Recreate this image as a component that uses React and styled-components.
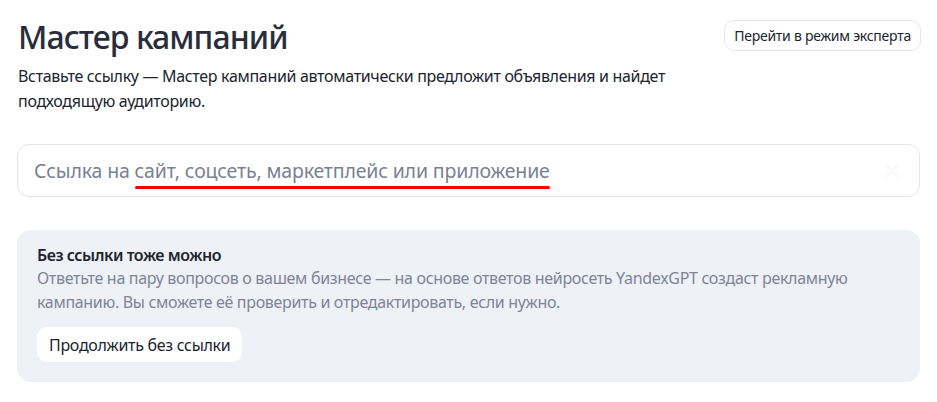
import React from "react";
import styled, { createGlobalStyle } from "styled-components";

const Global = createGlobalStyle`
  html, body { margin: 0; padding: 0; background: #fff; }
  body { font-family: "Noto Sans", "Open Sans", sans-serif; color: #21242e; }
  * { box-sizing: border-box; }
`;

const Page = styled.div`
  width: 937px;
  padding: 17px 16px 0 17px;
  display: flex;
  flex-direction: column;
`;

const Header = styled.div`
  display: flex;
  justify-content: space-between;
  align-items: flex-start;
`;

const TitleBlock = styled.div`
  display: flex;
  flex-direction: column;
  padding-left: 1px;
`;

const Title = styled.h1`
  margin: 0;
  font-size: 32px;
  font-weight: 500;
  line-height: 40px;
  color: #2a2e3a;
  letter-spacing: -0.95px;
`;

const Lead = styled.p`
  margin: 7px 0 0;
  font-size: 16px;
  line-height: 25px;
  color: #21242e;
  letter-spacing: -0.32px;
  max-width: 660px;
`;

const ExpertButton = styled.button`
  margin-top: 3px;
  height: 31px;
  padding: 0 9px;
  border: 1px solid #e3e5ee;
  border-radius: 10px;
  background: #fff;
  font-family: inherit;
  font-size: 14px;
  letter-spacing: -0.25px;
  color: #21242e;
`;

const InputBox = styled.div`
  margin-top: 30px;
  margin-right: 1px;
  height: 53px;
  border: 1px solid #e3e5ee;
  border-radius: 12px;
  display: flex;
  align-items: center;
  justify-content: space-between;
  padding: 0 18px 0 16px;
`;

const Placeholder = styled.span`
  font-size: 19.5px;
  letter-spacing: -0.15px;
  color: #7a8094;
`;

const Mark = styled.span`
  position: relative;
  &::after {
    content: "";
    position: absolute;
    left: 0;
    right: 0;
    bottom: -5px;
    height: 3px;
    border-radius: 2px;
    background: #ff0000;
  }
`;

const ClearIcon = styled.svg`
  width: 18px;
  height: 18px;
  flex: none;
`;

const Panel = styled.div`
  margin-top: 33px;
  margin-right: 1px;
  background: #eef1f6;
  border-radius: 14px;
  padding: 14px 20px 20px;
  display: flex;
  flex-direction: column;
`;

const PanelTitle = styled.div`
  font-size: 16px;
  font-weight: 600;
  line-height: 22px;
  letter-spacing: -0.45px;
  color: #21242e;
`;

const PanelText = styled.div`
  font-size: 16px;
  line-height: 24px;
  letter-spacing: -0.32px;
  color: #7f8497;
  max-width: 840px;
`;

const PlainButton = styled.button`
  align-self: flex-start;
  margin-top: 13px;
  height: 35px;
  padding: 0 12px;
  border: none;
  border-radius: 10px;
  background: #fff;
  font-family: inherit;
  font-size: 16px;
  letter-spacing: -0.3px;
  color: #21242e;
`;

export default function App() {
  return (
    <>
      <Global />
      <Page>
        <Header>
          <TitleBlock>
            <Title>Мастер кампаний</Title>
            <Lead>
              Вставьте ссылку — Мастер кампаний автоматически предложит объявления и найдет подходящую аудиторию.
            </Lead>
          </TitleBlock>
          <ExpertButton>Перейти в режим эксперта</ExpertButton>
        </Header>
        <InputBox>
          <Placeholder>
            Ссылка на <Mark>сайт, соцсеть, маркетплейс или приложение</Mark>
          </Placeholder>
          <ClearIcon viewBox="0 0 18 18">
            <path d="M3 3 L15 15 M15 3 L3 15" stroke="#f4f5f7" strokeWidth="1.5" strokeLinecap="round" />
          </ClearIcon>
        </InputBox>
        <Panel>
          <PanelTitle>Без ссылки тоже можно</PanelTitle>
          <PanelText>
            Ответьте на пару вопросов о вашем бизнесе — на основе ответов нейросеть YandexGPT создаст рекламную кампанию. Вы сможете её проверить и отредактировать, если нужно.
          </PanelText>
          <PlainButton>Продолжить без ссылки</PlainButton>
        </Panel>
      </Page>
    </>
  );
}
